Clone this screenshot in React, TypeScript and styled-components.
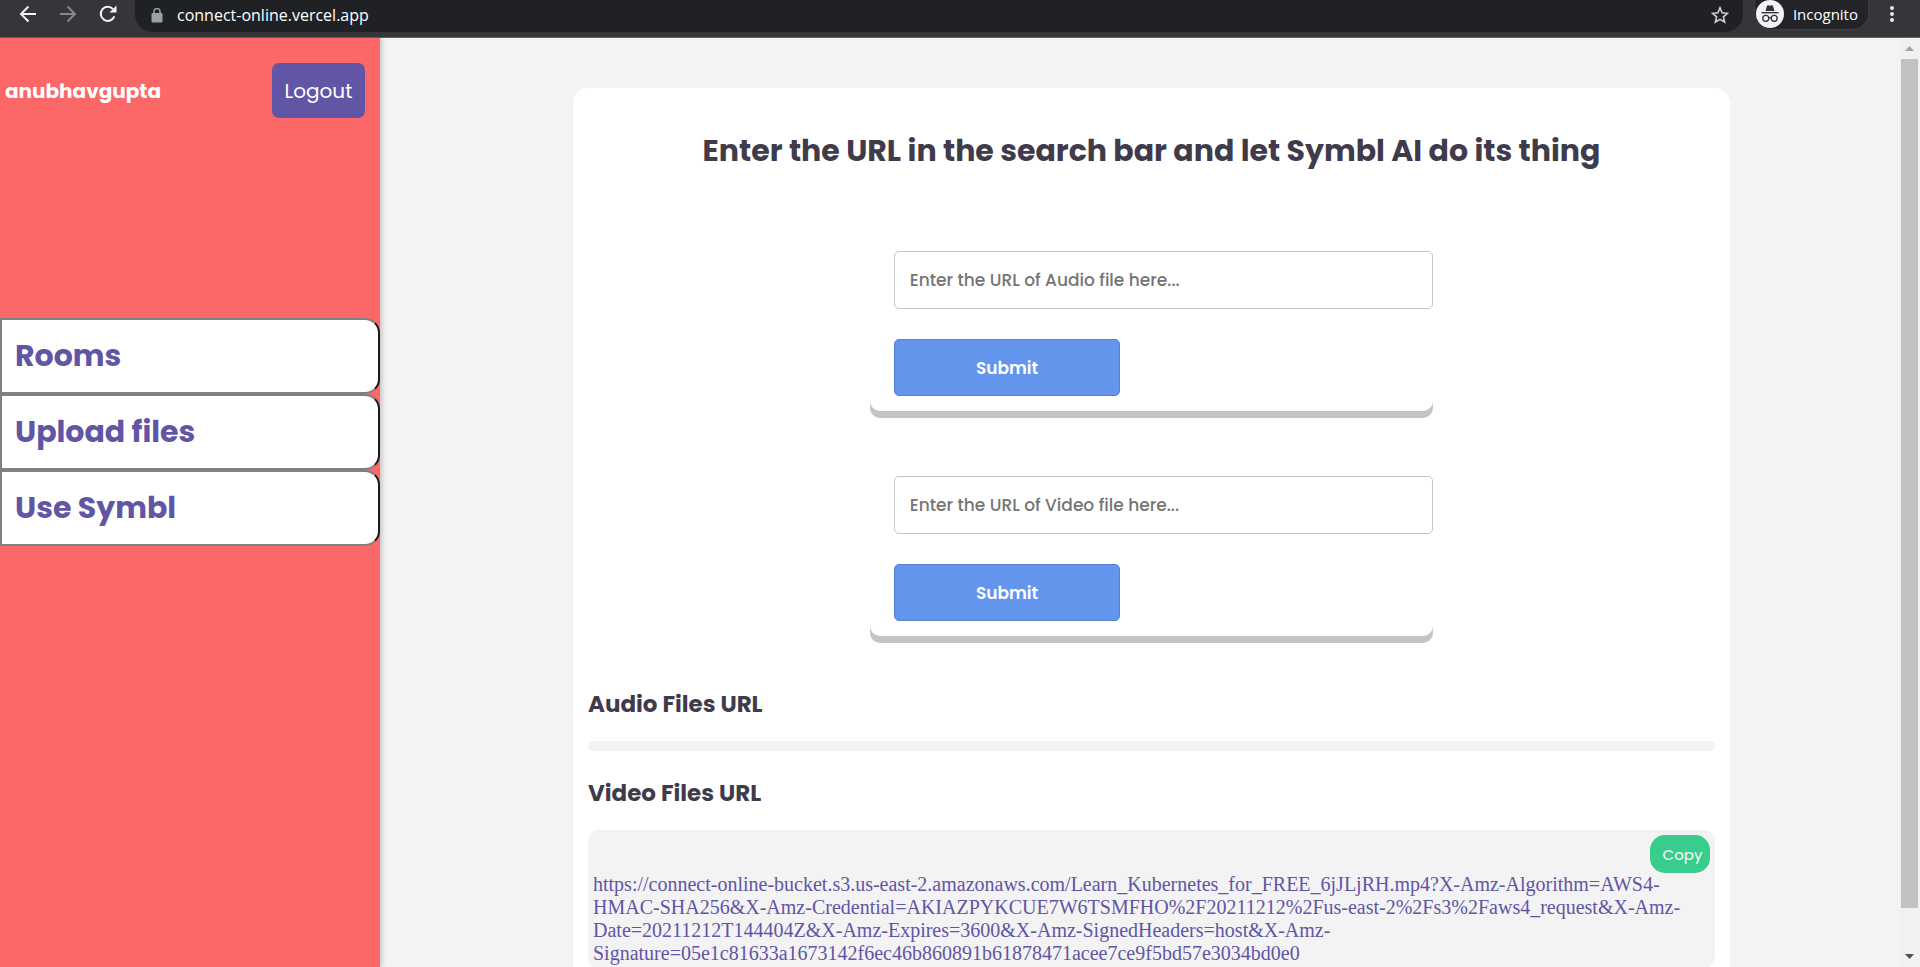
import React from "react";
import styled, { createGlobalStyle } from "styled-components";

const sans = `"Poppins", "Inter", "Open Sans", sans-serif`;
const chromeSans = `"Segoe UI", "Open Sans", "Noto Sans", sans-serif`;

const GlobalStyle = createGlobalStyle`
  * { box-sizing: border-box; }
  body { margin: 0; background: #f3f3f3; font-family: ${sans}; }
  h1, h2, p { margin: 0; }
  button, input { font-family: inherit; }
`;

const Window = styled.div`
  display: flex;
  flex-direction: column;
  height: 100vh;
  overflow: hidden;
`;

const Toolbar = styled.header`
  flex: none;
  display: flex;
  align-items: flex-start;
  height: 38px;
  padding: 0 18px 0 14px;
  background: #35363a;
  border-bottom: 1px solid #636467;
  color: #fff;
  font-family: ${chromeSans};
`;

const IconButton = styled.button<{ $dim?: boolean }>`
  display: flex;
  align-items: center;
  justify-content: center;
  width: 28px;
  height: 28px;
  margin-right: 12px;
  padding: 0;
  border: 0;
  background: none;
  color: ${(p) => (p.$dim ? "#86878a" : "#f1f3f4")};
`;

const AddressBar = styled.label`
  flex: 1;
  display: flex;
  align-items: center;
  height: 32px;
  margin-left: 1px;
  padding: 0 14px 2px 16px;
  background: #202124;
  border-radius: 0 0 18px 18px;
  color: #9aa0a6;
`;

const AddressInput = styled.input`
  flex: 1;
  min-width: 0;
  height: 24px;
  margin-left: 14px;
  padding: 0;
  border: 0;
  outline: 0;
  background: none;
  color: #fff;
  font-size: 16px;
`;

const Profile = styled.button`
  display: flex;
  align-items: center;
  gap: 9px;
  height: 30px;
  margin: 0 13px 0 11px;
  padding: 0 10px 2px 1px;
  border: 1px solid #3f4044;
  border-top: 0;
  border-radius: 0 0 16px 16px;
  background: #232428;
  color: #fff;
  font-size: 15px;
`;

const MenuButton = styled.button`
  width: 20px;
  height: 28px;
  padding: 0;
  border: 0;
  background: none;
  color: #e8eaed;
`;

const Page = styled.div`
  flex: 1;
  min-height: 0;
  display: flex;
`;

const Sidebar = styled.aside`
  position: relative;
  flex: none;
  width: 380px;
  background: #fc6767;
  box-shadow: 2px 0 5px rgba(0, 0, 0, 0.2);
`;

const Account = styled.div`
  display: flex;
  align-items: center;
  justify-content: space-between;
  padding: 25px 15px 25px 5px;
`;

const UserName = styled.strong`
  color: #fff;
  font-size: 20px;
  font-weight: 700;
`;

const Logout = styled.button`
  width: 93px;
  height: 55px;
  padding: 0;
  border: 0;
  border-radius: 7px;
  background: #6155a6;
  color: #fff;
  font-size: 20px;
`;

const Nav = styled.nav`
  display: flex;
  flex-direction: column;
  margin-top: 175px;
`;

const NavLink = styled.a`
  height: 76px;
  padding: 0 13px;
  border: 2px solid #808080;
  border-right-color: #1a1a1a;
  border-radius: 0 15px 15px 0;
  background: #fff;
  color: #6155a6;
  font-size: 30px;
  font-weight: 700;
  line-height: 72px;
  text-decoration: none;
`;

const Main = styled.main`
  flex: 1;
  min-width: 0;
  padding: 50px 169px 0 193px;
  overflow: hidden;
`;

const Card = styled.section`
  padding: 40px 15px 60px;
  border-radius: 15px;
  background: #fff;
`;

const Title = styled.h1`
  color: #3f3b4b;
  font-size: 30px;
  font-weight: 700;
  line-height: 45px;
  text-align: center;
  white-space: nowrap;
`;

const Forms = styled.div`
  display: grid;
  row-gap: 49px;
  width: 50%;
  margin: 62px auto 50px;
`;

const UrlForm = styled.form`
  padding: 16px 0 15px 24px;
  border-radius: 10px;
  box-shadow: 0 7px 0 #c4c3ca;
`;

const UrlInput = styled.input`
  display: block;
  width: 100%;
  height: 58px;
  margin-bottom: 30px;
  padding: 0 15px;
  border: 1px solid #c4c3ca;
  border-radius: 5px;
  background: #fff;
  font-size: 17px;
  font-weight: 500;
  &::placeholder { color: #757575; }
`;

const Submit = styled.button`
  display: block;
  width: 42%;
  height: 57px;
  border: 1px solid #5580d0;
  border-radius: 5px;
  background: #6495ed;
  color: #fff;
  font-size: 17px;
  font-weight: 600;
`;

const SectionTitle = styled.h2`
  margin: 24px 0 19px;
  color: #3f3b4b;
  font-size: 23px;
  font-weight: 700;
  line-height: 36px;
`;

const FileList = styled.div`
  display: flex;
  flex-direction: column;
  align-items: flex-end;
  padding: 5px;
  border-radius: 10px;
  background: #f3f3f3;
`;

const Copy = styled.button`
  width: 60px;
  height: 38px;
  padding: 0 0 0 5px;
  border: 0;
  border-radius: 15px;
  background: #38cd8d;
  color: #fff;
  font-size: 15px;
`;

const FileUrl = styled.p`
  width: 100%;
  margin-bottom: -2px;
  color: #6155a6;
  font-family: "Liberation Serif", "Times New Roman", serif;
  font-size: 20px;
  line-height: 23px;
  overflow-wrap: anywhere;
`;

const Scrollbar = styled.div`
  flex: none;
  display: flex;
  flex-direction: column;
  align-items: center;
  width: 21px;
  background: #f1f1f1;
`;

const ScrollArrow = styled.button`
  display: flex;
  align-items: center;
  justify-content: center;
  width: 17px;
  height: 21px;
  padding: 0;
  border: 0;
  background: none;
`;

const ScrollTrack = styled.div`
  flex: 1;
  width: 17px;
  padding-bottom: 38px;
`;

const ScrollThumb = styled.div`
  height: 100%;
  background: #c1c1c1;
`;

const forms = [
  { id: "audio", label: "Enter the URL of Audio file here..." },
  { id: "video", label: "Enter the URL of Video file here..." },
];

const links = ["Rooms", "Upload files", "Use Symbl"];

const videoUrl =
  "https://connect-online-bucket.s3.us-east-2.amazonaws.com/Learn_Kubernetes_for_FREE_6jJLjRH.mp4?X-Amz-Algorithm=AWS4-HMAC-SHA256&X-Amz-Credential=AKIAZPYKCUE7W6TSMFHO%2F20211212%2Fus-east-2%2Fs3%2Faws4_request&X-Amz-Date=20211212T144404Z&X-Amz-Expires=3600&X-Amz-SignedHeaders=host&X-Amz-Signature=05e1c81633a1673142f6ec46b860891b61878471acee7ce9f5bd57e3034bd0e0";

const Arrow = ({ flip }: { flip?: boolean }) => (
  <svg width="18" height="18" viewBox="0 0 18 18" fill="none" stroke="currentColor" strokeWidth="2">
    {flip ? <path d="M1 9h15M8.500 1.500L16 9l-7.500 7.500" /> : <path d="M17 9H2M9.500 1.500L2 9l7.500 7.500" />}
  </svg>
);

const Reload = () => (
  <svg width="18" height="18" viewBox="0 0 18 18">
    <path d="M15.300 11.400A7 7 0 1 1 14 4.200" fill="none" stroke="currentColor" strokeWidth="2" />
    <path d="M17.500.5v7h-7z" fill="currentColor" />
  </svg>
);

const Lock = () => (
  <svg width="12" height="15" viewBox="0 0 12 15">
    <rect x="0.500" y="5" width="11" height="9.500" rx="1" fill="currentColor" />
    <path d="M3 6V3.500a3 3 0 0 1 6 0V6" fill="none" stroke="currentColor" strokeWidth="1.500" />
  </svg>
);

const Star = () => (
  <svg width="18" height="18" viewBox="0 0 18 18" fill="none" stroke="#d0d2d5" strokeWidth="1.600">
    <path d="M9 1.800l2.100 5 5.400.5-4.100 3.600 1.200 5.300L9 13.400l-4.600 2.800 1.200-5.300L1.500 7.300l5.400-.5z" />
  </svg>
);

const IncognitoIcon = () => (
  <svg width="28" height="28" viewBox="0 0 28 28">
    <circle cx="14" cy="14" r="14" fill="#f1f3f4" />
    <path d="M9.500 11l1.600-5.200q.3-.8 1.200-.5l1.700.5 1.700-.5q.9-.3 1.200.5L18.500 11z" fill="#303135" />
    <path d="M5.500 12.700h17" stroke="#303135" strokeWidth="1.400" />
    <g fill="none" stroke="#303135" strokeWidth="1.300">
      <circle cx="9.800" cy="18.300" r="3" />
      <circle cx="18.200" cy="18.300" r="3" />
      <path d="M12.800 18q1.200-.9 2.400 0" />
    </g>
  </svg>
);

const Dots = () => (
  <svg width="20" height="28" viewBox="0 0 20 28" fill="currentColor">
    <circle cx="10" cy="8" r="2" />
    <circle cx="10" cy="14" r="2" />
    <circle cx="10" cy="20" r="2" />
  </svg>
);

export default function App() {
  return (
    <Window>
      <GlobalStyle />
      <Toolbar>
        <IconButton aria-label="Back"><Arrow /></IconButton>
        <IconButton aria-label="Forward" $dim><Arrow flip /></IconButton>
        <IconButton aria-label="Reload"><Reload /></IconButton>
        <AddressBar>
          <Lock />
          <AddressInput aria-label="Address" defaultValue="connect-online.vercel.app" />
          <Star />
        </AddressBar>
        <Profile><IncognitoIcon />Incognito</Profile>
        <MenuButton aria-label="Menu"><Dots /></MenuButton>
      </Toolbar>
      <Page>
        <Sidebar>
          <Account>
            <UserName>anubhavgupta</UserName>
            <Logout>Logout</Logout>
          </Account>
          <Nav>
            {links.map((text) => (
              <NavLink key={text} href="#">{text}</NavLink>
            ))}
          </Nav>
        </Sidebar>
        <Main>
          <Card>
            <Title>Enter the URL in the search bar and let Symbl AI do its thing</Title>
            <Forms>
              {forms.map((f) => (
                <UrlForm key={f.id} onSubmit={(e) => e.preventDefault()}>
                  <UrlInput id={f.id} aria-label={f.label} placeholder={f.label} />
                  <Submit type="submit">Submit</Submit>
                </UrlForm>
              ))}
            </Forms>
            <SectionTitle>Audio Files URL</SectionTitle>
            <FileList />
            <SectionTitle>Video Files URL</SectionTitle>
            <FileList>
              <Copy>Copy</Copy>
              <FileUrl>{videoUrl}</FileUrl>
            </FileList>
          </Card>
        </Main>
        <Scrollbar>
          <ScrollArrow aria-label="Scroll up">
            <svg width="9" height="5" viewBox="0 0 9 5"><path d="M0 5L4.500 0 9 5z" fill="#a3a3a3" /></svg>
          </ScrollArrow>
          <ScrollTrack><ScrollThumb /></ScrollTrack>
          <ScrollArrow aria-label="Scroll down">
            <svg width="9" height="5" viewBox="0 0 9 5"><path d="M0 0h9L4.500 5z" fill="#505050" /></svg>
          </ScrollArrow>
        </Scrollbar>
      </Page>
    </Window>
  );
}
